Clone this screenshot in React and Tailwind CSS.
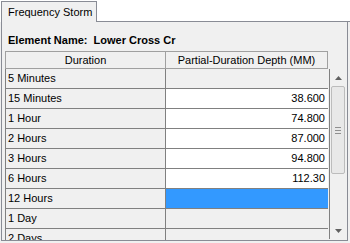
import React from "react";

const rows = [
    { label: "5 Minutes", value: "" },
    { label: "15 Minutes", value: "38.600" },
    { label: "1 Hour", value: "74.800" },
    { label: "2 Hours", value: "87.000" },
    { label: "3 Hours", value: "94.800" },
    { label: "6 Hours", value: "112.30" },
    { label: "12 Hours", value: "", selected: true },
    { label: "1 Day", value: "" },
    { label: "2 Days", value: "" },
];

const App = () => {
    return (
        <div className="w-[350px] h-[243px] bg-[#f0f0f0] overflow-hidden text-[11px] text-black font-['Liberation_Sans',Arial,sans-serif]">
            {/* tab strip */}
            <div className="flex items-end h-[22px] bg-white">
                <div className="w-[1px] h-full" />
                <div className="w-[96px] h-[21px] bg-[#f0f0f0] border border-b-0 border-[#898c95] pl-[6px] pt-[3px] leading-[14px]">
                    Frequency Storm
                </div>
                <div className="flex-1 border-b border-[#898c95]" />
            </div>

            {/* panel */}
            <div className="h-[219px] ml-[1px] mr-[2px] border-l border-r border-b border-[#898c95] overflow-hidden">
                <div className="pt-[11px] pl-[6px] font-bold leading-[14px]">Element Name:&nbsp; Lower Cross Cr</div>

                <div className="mt-[4px] ml-[3px] flex">
                    <div className="w-[323px]">
                        <div className="flex h-[18px] leading-[16px]">
                            <div className="w-[161px] border border-[#a0a0a0] bg-[#f0f0f0] text-center">Duration</div>
                            <div className="w-[162px] border border-l-0 border-[#a0a0a0] bg-[#f0f0f0] text-center">Partial-Duration Depth (MM)</div>
                        </div>
                        <div className="border-l border-[#808080]">
                            {rows.map((r) => (
                                <div key={r.label} className="flex h-[20px] border-b border-[#808080] leading-[19px]">
                                    <div className="w-[160px] pl-[2px] border-r border-[#808080] bg-[#f0f0f0]">{r.label}</div>
                                    <div
                                        className={
                                            r.selected
                                                ? "flex-1 bg-[#3399ff]"
                                                : r.value
                                                ? "flex-1 bg-white text-right pr-[3px]"
                                                : "flex-1 bg-[#f0f0f0]"
                                        }
                                    >
                                        {r.value}
                                    </div>
                                </div>
                            ))}
                        </div>
                    </div>

                    {/* scrollbar */}
                    <div className="w-[17px] mt-[18px] ml-[1px] border-l border-[#808080] flex flex-col items-center h-[170px] bg-[#f0f0f0]">
                        <div className="h-[17px] w-full flex items-center justify-center">
                            <svg width="7" height="4" viewBox="0 0 7 4"><path d="M3.5 0 L7 4 L0 4 Z" fill="#606060" /></svg>
                        </div>
                        <div className="w-[14px] h-[88px] rounded-[2px] border border-[#bcbcbc] bg-[#e8e8e8] flex flex-col items-center justify-center gap-[2px]">
                            <div className="w-[6px] h-[1px] bg-[#909090]" />
                            <div className="w-[6px] h-[1px] bg-[#909090]" />
                            <div className="w-[6px] h-[1px] bg-[#909090]" />
                        </div>
                        <div className="flex-1" />
                        <div className="h-[17px] w-full flex items-center justify-center">
                            <svg width="7" height="4" viewBox="0 0 7 4"><path d="M0 0 L7 0 L3.5 4 Z" fill="#606060" /></svg>
                        </div>
                    </div>
                </div>
            </div>
        </div>
    );
};

export default App;
